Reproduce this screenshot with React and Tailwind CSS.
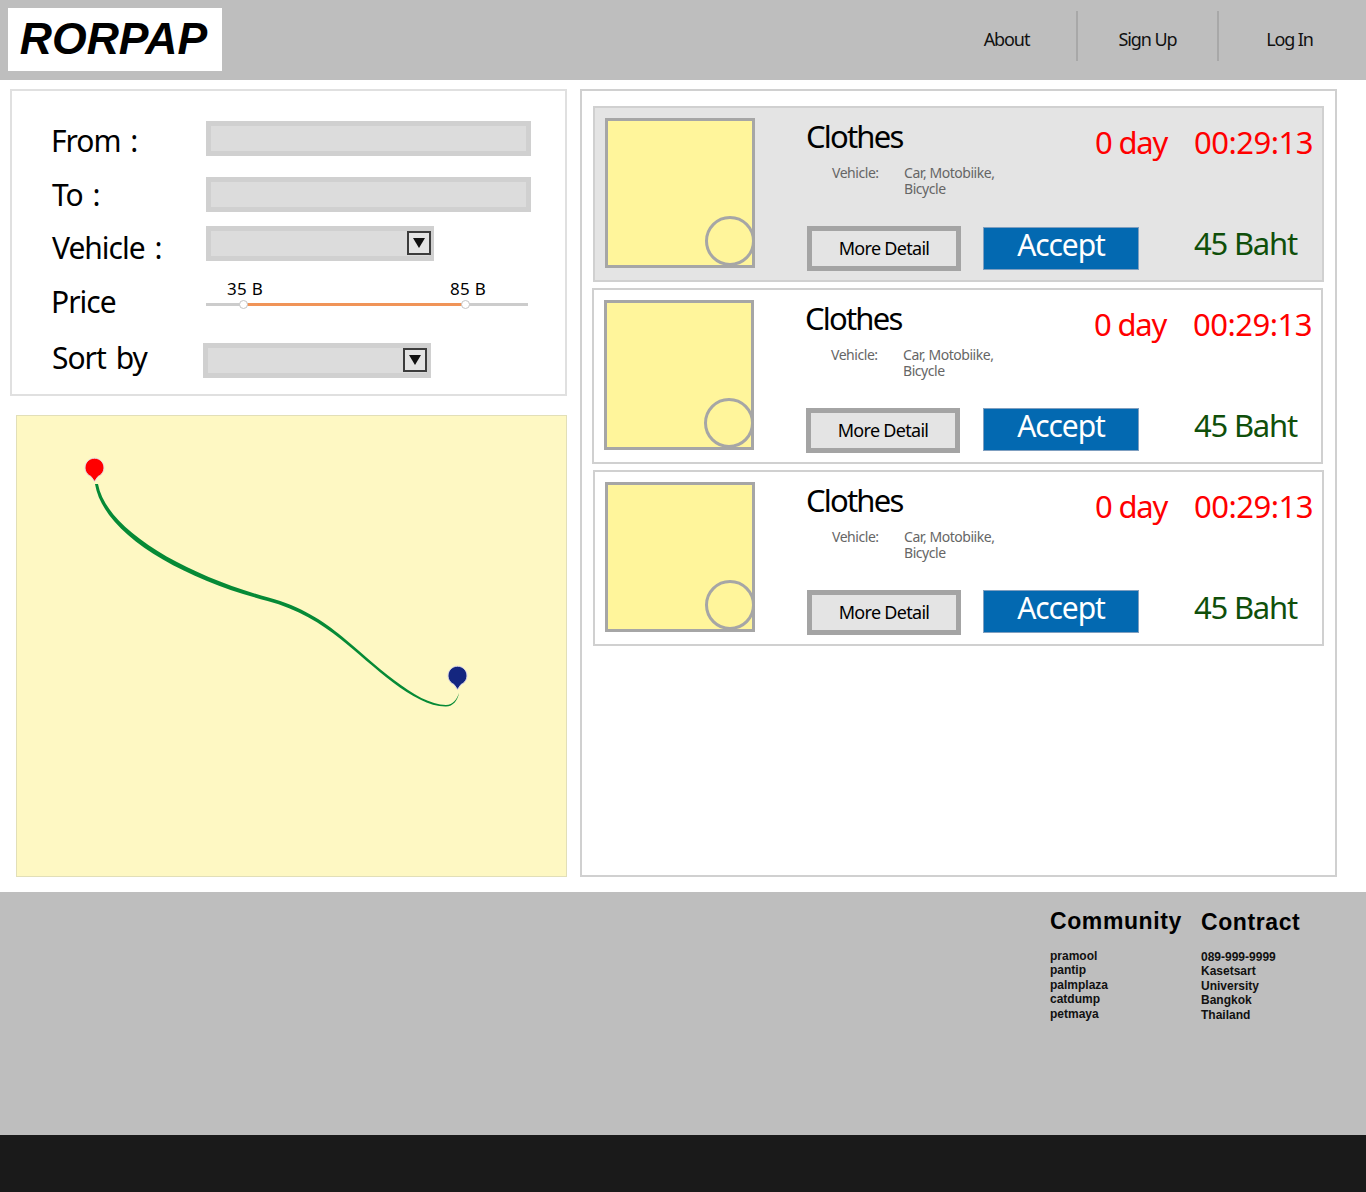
const ui = "font-['Noto_Sans',sans-serif]";

function Select({ boxClass = "" }) {
  return (
    <div className={`flex h-[35px] w-[228px] items-start justify-end border-[5px] border-[#d0d0d0] bg-[#dcdcdc] ${boxClass}`}>
      <div className="flex h-[24px] w-[24px] items-center justify-center border-2 border-[#3c3c3c] bg-[#e4e4e4]">
        <svg width="12" height="10" viewBox="0 0 12 10"><path d="M0 0H12L6 10Z" fill="#111" /></svg>
      </div>
    </div>
  );
}

function Row({ label, className = "", labelClass = "w-[154px]", children }) {
  return (
    <div className={`flex items-start ${className}`}>
      <div className={`shrink-0 text-[30px] leading-[40px] tracking-[-1px] [word-spacing:3px] text-black ${labelClass}`}>{label}</div>
      {children}
    </div>
  );
}

function Card({ active, className = "", acceptClass = "" }) {
  return (
    <div className={`flex h-[176px] w-[731px] border-2 border-[#d0d0d0] pl-[10px] pt-[10px] ${active ? "bg-[#e4e4e4]" : "bg-white"} ${className}`}>
      <div className="relative h-[150px] w-[150px] shrink-0 border-[3px] border-[#a6a6a6] bg-[#fff59b]">
        <div className="absolute bottom-[-1px] right-[-3px] h-[50px] w-[50px] rounded-full border-[3px] border-[#a6a6a6]" />
      </div>
      <div className="ml-[51px] flex w-[511px] flex-col">
        <div className="flex h-[108px]">
          <div className="w-[289px]">
            <div className="mt-[-2px] text-[31px] leading-[40px] tracking-[-1.8px] text-black">Clothes</div>
            <div className="ml-[1px] mt-[9px] flex text-[14px] leading-[16px] tracking-[-0.45px] text-[#666]">
              <div className="ml-[25px] w-[72px]">Vehicle:</div>
              <div className="w-[100px]">Car, Motobiike, Bicycle</div>
            </div>
          </div>
          <div className="mt-[4px] flex text-[31px] leading-[40px] text-[#ff0000]">
            <div className="w-[99px] tracking-[-1.2px]">0 day</div>
            <div className="tracking-[-0.5px]">00:29:13</div>
          </div>
        </div>
        <div className="ml-[1px] flex items-start">
          <div className="flex h-[45px] w-[154px] items-center justify-center border-[5px] border-[#a4a4a4] bg-[#e4e4e4] text-[18px] tracking-[-0.7px] text-black">More Detail</div>
          <div className={`ml-[22px] flex h-[43px] w-[156px] items-start justify-center border border-[#7f9fc0] bg-[#0369b1] text-[30px] leading-[34px] tracking-[-1.1px] text-white ${acceptClass}`}>Accept</div>
          <div className="ml-[55px] mt-[-1px] text-[31px] leading-[36px] tracking-[-1.2px] text-[#0f4f0a]">45 Baht</div>
        </div>
      </div>
    </div>
  );
}

export default function App() {
  return (
    <div className={`flex min-h-[1192px] w-[1366px] flex-col bg-white ${ui}`}>
      <header className="flex h-[80px] items-start justify-between bg-[#bebebe] pl-[8px] pt-[8px]">
        <div className="flex h-[63px] w-[214px] items-center justify-center bg-white pr-[3px] font-['Liberation_Sans',sans-serif] text-[44.6px] font-bold italic text-black">RORPAP</div>
        <nav className="mr-[6px] mt-[3px] flex h-[50px] text-[18px] tracking-[-1.1px] text-[#111]">
          <div className="flex w-[141px] items-center justify-center border-r-2 border-[#a8a8a8] pt-[6px]">About</div>
          <div className="flex w-[141px] items-center justify-center border-r-2 border-[#a8a8a8] pt-[6px]">Sign Up</div>
          <div className="flex w-[141px] items-center justify-center pt-[6px]">Log In</div>
        </nav>
      </header>

      <main className="flex h-[812px] pl-[10px] pt-[9px]">
        <div className="w-[557px]">
          <div className="h-[307px] border-2 border-[#e0e0e0] pl-[40px] pt-[30px]">
            <Row label="From :" className="h-[56px]" labelClass="w-[154px] ml-[-1px] mr-[1px]"><div className="h-[35px] w-[325px] border-[5px] border-[#d0d0d0] bg-[#dcdcdc]" /></Row>
            <Row label="To :" className="h-[49px]" labelClass="w-[154px] mt-[-2px]"><div className="h-[35px] w-[325px] border-[5px] border-[#d0d0d0] bg-[#dcdcdc]" /></Row>
            <Row label="Vehicle :" className="h-[54px]" labelClass="w-[154px] mt-[2px]"><Select boxClass="[&>div]:mr-[-2px]" /></Row>
            <Row label="Price" className="h-[63px]" labelClass="w-[154px] ml-[-1px] mr-[1px] mt-[2px] tracking-[-1.3px]">
              <div className="relative mt-[-3px] h-[40px] w-[322px]">
                <div className="flex justify-between pl-[21px] pr-[42px] text-[17px] leading-[24px] tracking-[0.3px] text-black"><span>35 B</span><span>85 B</span></div>
                <div className="mt-[2px] h-[3px] bg-[#cccccc]" />
                <div className="absolute left-[37px] top-[26px] h-[3px] w-[222px] bg-[#f09458]" />
                <div className="absolute left-[33px] top-[23px] h-[9px] w-[9px] rounded-full border border-[#c4c4c4] bg-white" />
                <div className="absolute left-[255px] top-[23px] h-[9px] w-[9px] rounded-full border border-[#c4c4c4] bg-white" />
              </div>
            </Row>
            <Row label="Sort by" labelClass="w-[151px] mt-[-5px] tracking-[-0.6px]"><Select boxClass="[&>div]:mr-[-1px]" /></Row>
          </div>
          <div className="relative ml-[6px] mt-[19px] h-[462px] w-[551px] border border-[#e2dfb8] bg-[#fef8c3]">
            <svg className="absolute left-0 top-0" width="551" height="462" viewBox="16 415 551 462">
              <path d="M97 483C105 528 182 573 267.5 596.5C300 605 322 620 341 635.5C372 661 415 704 445 704C452 704 456 698 458 692C457 699 452 705.5 445 705.5C413 706 372 664 339.5 638C320 622.5 297 608 266.5 600C178 577 102 532 94 483Z" fill="#068a36" />
              <path d="M93.5 480.5L90 475.5A9.5 9.5 0 1 1 97 475.5Z" fill="#ff0000" stroke="#e6dfe6" strokeWidth="1" />
              <path d="M456.5 688.5L453 683.5A9.5 9.5 0 1 1 460 683.5Z" fill="#14267f" stroke="#dcd8e6" strokeWidth="1" />
            </svg>
          </div>
        </div>
        <div className="ml-[13px] flex h-[788px] w-[757px] flex-col border-2 border-[#d0d0d0] pl-[11px] pt-[15px]">
          <Card active acceptClass="mt-[1px]" />
          <Card className="ml-[-1px] mt-[6px]" acceptClass="ml-[23px]" />
          <Card className="mt-[6px]" />
        </div>
      </main>

      <footer className="flex h-[243px] justify-start bg-[#bebebe] pl-[1050px] pt-[14px] font-['Liberation_Sans',sans-serif] text-[12px] font-bold leading-[14.5px] text-[#111]">
        <div className="w-[151px]">
          <div className="text-[23px] leading-[30px] tracking-[0.6px] text-black">Community</div>
          <div className="mt-[12.5px]">
            <div>pramool</div><div>pantip</div><div>palmplaza</div><div>catdump</div><div>petmaya</div>
          </div>
        </div>
        <div className="w-[100px] pt-[1px]">
          <div className="text-[23px] leading-[30px] tracking-[0.6px] text-black">Contract</div>
          <div className="mt-[12.5px]">
            <div>089-999-9999</div><div>Kasetsart University</div><div>Bangkok Thailand</div>
          </div>
        </div>
      </footer>
      <div className="h-[57px] bg-[#1a1a1a]" />
    </div>
  );
}
